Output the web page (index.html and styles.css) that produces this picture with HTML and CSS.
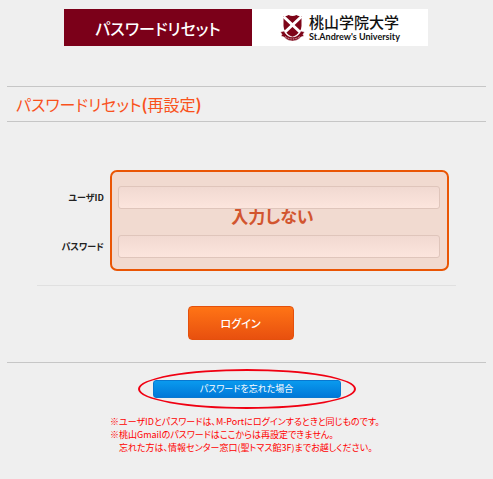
FILE: index.html
```html
<!DOCTYPE html>
<html lang="ja">
<head>
  <meta charset="UTF-8">
  <meta name="viewport" content="width=device-width, initial-scale=1.0">
  <title>パスワードリセット</title>
  <link rel="stylesheet" href="styles.css">
</head>
<body>
  <header class="site-header">
    <div class="site-title">パスワードリセット</div>
    <div class="logo">
      <svg class="emblem" width="25" height="28" viewBox="0 0 25 28" aria-hidden="true">
        <path d="M3.5 2 Q7 2.5 8.5 1 Q12.500 3 16.500 1 Q18 2.500 21.500 2 V12 Q21.500 19 12.500 23 Q3.500 19 3.500 12 Z" fill="#7d0519"/>
        <path d="M3.500 2.500 L21 19 M21.500 2.500 L4 19" stroke="#fff" stroke-width="3"/>
        <path d="M0.500 18 L4 17 Q7 23 12.500 23 Q18 23 21 17 L24.500 18 L23 20.500 L24 22 L21 23 Q17.500 27 12.500 27 Q7.500 27 4 23 L1 22 L2 20.500 Z" fill="#7d0519" stroke="#fff" stroke-width="0.500"/>
        <path d="M5 22.500 Q12.500 27.500 20 22.500" fill="none" stroke="#e9c9ce" stroke-width="1" stroke-dasharray="1 0.700"/>
      </svg>
      <div class="logo-text">
        <div class="logo-ja">桃山学院大学</div>
        <div class="logo-en">St.Andrew's University</div>
      </div>
    </div>
  </header>

  <main>
    <h1>パスワードリセット<b>(</b>再設定<b>)</b></h1>

    <form>
      <div class="fields">
        <div class="mask">入力しない</div>
        <label for="user-id">ユーザID</label>
        <input type="text" id="user-id">
        <label for="password">パスワード</label>
        <input type="password" id="password">
      </div>
      <div class="actions">
        <button type="submit" class="login-button">ログイン</button>
      </div>
    </form>

    <div class="forgot">
      <button type="button" class="forgot-button">パスワードを忘れた場合</button>
    </div>

    <div class="notes">
      <p>※ユーザIDとパスワードは、M-Portにログインするときと同じものです。</p>
      <p>※桃山Gmailのパスワードはここからは再設定できません。</p>
      <p class="indent">忘れた方は、情報センター窓口(聖トマス館3F)までお越しください。</p>
    </div>
  </main>
</body>
</html>
```

FILE: styles.css
```css
* {
  box-sizing: border-box;
}

body {
  margin: 0;
  padding: 9px 7px;
  background: #efefef;
  color: #222;
  font-family: "Noto Sans CJK JP", sans-serif;
  font-feature-settings: "palt";
}

.site-header {
  display: flex;
  height: 37px;
  margin: 0 58px 0 57px;
}

.site-title {
  flex: 188;
  display: flex;
  align-items: center;
  justify-content: center;
  background: #7b0019;
  color: #fff;
  font-size: 16px;
  font-weight: 500;
}

.logo {
  flex: 176;
  display: flex;
  align-items: center;
  justify-content: center;
  gap: 4px;
  background: #fff;
  color: #111;
}

.logo-ja {
  font-size: 15px;
  font-weight: 500;
  line-height: 18px;
}

.logo-en {
  font-family: Lato, sans-serif;
  font-size: 9px;
  font-weight: bold;
  line-height: 12px;
}

h1 {
  margin: 40px 0 0;
  padding: 0 9px;
  border-top: 1px solid #c6c6c6;
  border-bottom: 1px solid #c6c6c6;
  color: #f9521c;
  font-size: 16px;
  font-weight: normal;
  line-height: 34px;
}

form {
  padding: 48px 0 22px;
  border-bottom: 1px solid #c6c6c6;
}

.fields {
  display: grid;
  grid-template-columns: 97px 1fr;
  grid-template-rows: 23px 23px;
  column-gap: 6px;
  row-gap: 26px;
  align-items: center;
  margin-right: 37px;
  padding: 16px 0 13px;
}

.fields label {
  grid-column: 1;
  font-size: 9px;
  font-weight: bold;
  text-align: right;
}

.fields input {
  grid-column: 2;
  height: 23px;
  min-width: 0;
  margin: 0 9px 0 8px;
  padding: 0 6px;
  border: 1px solid #dfc5bb;
  border-radius: 3px;
  background: linear-gradient(#f1d9d1, #fce5dd);
  font-size: 12px;
}

.mask {
  grid-column: 2;
  grid-row: 1 / 3;
  align-self: stretch;
  display: flex;
  align-items: center;
  justify-content: center;
  margin: -16px 0 -13px;
  padding: 0 14px 10px 0;
  border: 2px solid #ea5504;
  border-radius: 7px;
  background: #f1dad0;
  color: #d2552f;
  font-size: 17px;
  font-weight: bold;
}

.fields label[for="user-id"],
#user-id {
  grid-row: 1;
}

.fields label[for="password"],
#password {
  grid-row: 2;
}

.actions {
  display: flex;
  justify-content: center;
  margin: 14px 30px 0;
  padding: 20px 12px 0 0;
  border-top: 1px solid #e0e0e0;
}

button {
  padding: 0;
  color: #fff;
  font-family: inherit;
  font-feature-settings: inherit;
  cursor: pointer;
}

.login-button {
  width: 106px;
  height: 34px;
  border: 1px solid #e4500c;
  border-radius: 4px;
  background: linear-gradient(#ff7415, #e8500f);
  font-size: 11px;
  font-weight: 500;
}

.forgot {
  width: 218px;
  height: 40px;
  margin: 6px auto 0;
  display: flex;
  align-items: center;
  justify-content: center;
  border: 2px solid #f00012;
  border-radius: 50%;
}

.forgot-button {
  width: 188px;
  height: 18px;
  border: 1px solid #0878d0;
  border-radius: 3px;
  background: linear-gradient(#0a9aee, #0078d8);
  font-size: 9px;
  line-height: 16px;
}

.notes {
  margin: 6px 0 0 103px;
  color: #f00;
  font-size: 9px;
  line-height: 13px;
}

.notes p {
  margin: 0;
}

.notes .indent {
  padding-left: 9px;
}
```
